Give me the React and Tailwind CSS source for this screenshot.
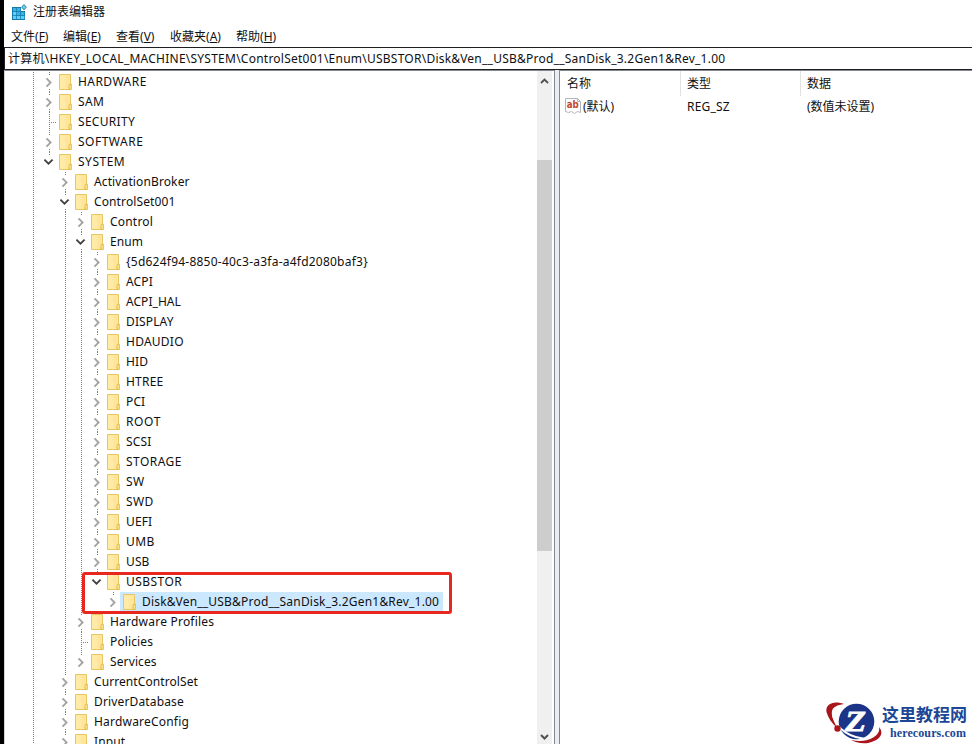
const tree = [
    { name: "HARDWARE", depth: 0, tracking: "tracking-[0.45px]" },
    { name: "SAM", depth: 0, tracking: "tracking-[0.4px]" },
    { name: "SECURITY", depth: 0, arrow: "none", tracking: "tracking-[0.3px]" },
    { name: "SOFTWARE", depth: 0, tracking: "tracking-[0.5px]" },
    { name: "SYSTEM", depth: 0, arrow: "down", below: false, tracking: "tracking-[0.5px]" },
    { name: "ActivationBroker", depth: 1 },
    { name: "ControlSet001", depth: 1, arrow: "down" },
    { name: "Control", depth: 2, tracking: "tracking-[0.2px]" },
    { name: "Enum", depth: 2, arrow: "down" },
    { name: "{5d624f94-8850-40c3-a3fa-a4fd2080baf3}", tracking: "tracking-[0.23px]" },
    { name: "ACPI" },
    { name: "ACPI_HAL", tracking: "tracking-[0.05px]" },
    { name: "DISPLAY" },
    { name: "HDAUDIO", tracking: "tracking-[0.25px]" },
    { name: "HID" },
    { name: "HTREE", tracking: "tracking-[0.2px]" },
    { name: "PCI" },
    { name: "ROOT", tracking: "tracking-[0.6px]" },
    { name: "SCSI", tracking: "tracking-[0.2px]" },
    { name: "STORAGE", tracking: "tracking-[0.45px]" },
    { name: "SW", tracking: "tracking-[0.4px]" },
    { name: "SWD", tracking: "tracking-[0.4px]" },
    { name: "UEFI" },
    { name: "UMB", tracking: "tracking-[0.4px]" },
    { name: "USB" },
    { name: "USBSTOR", arrow: "down", below: false, tracking: "tracking-[0.45px]" },
    { name: "Disk&Ven__USB&Prod__SanDisk_3.2Gen1&Rev_1.00", depth: 4, below: false, selected: true, tracking: "tracking-[0.2px]" },
    { name: "Hardware Profiles", depth: 2, tracking: "tracking-[0.22px]" },
    { name: "Policies", depth: 2, arrow: "none" },
    { name: "Services", depth: 2, below: false },
    { name: "CurrentControlSet", depth: 1, tracking: "tracking-[0.08px]" },
    { name: "DriverDatabase", depth: 1, tracking: "tracking-[0.15px]" },
    { name: "HardwareConfig", depth: 1, tracking: "tracking-[0.2px]" },
    { name: "Input", depth: 1 },
];

// which vertical guide lines run through a row, by depth
const guidesByDepth = [[1], [1, 0], [1, 0, 1], [1, 0, 1, 1], [1, 0, 1, 1, 0]];

const menus = [
    { label: "文件", hot: "F", width: "w-[52px]" },
    { label: "编辑", hot: "E", width: "w-[53px]" },
    { label: "查看", hot: "V", width: "w-[54px]" },
    { label: "收藏夹", hot: "A", width: "w-[66px]" },
    { label: "帮助", hot: "H", width: "w-[54px]" },
];

function Dots({ height }) {
    return <div className={`w-px bg-[repeating-linear-gradient(to_bottom,#808080_0_1px,transparent_1px_2px)] ${height}`} />;
}

function Arrow({ type }) {
    if (type === "down") {
        return (
            <svg className="block" width="16" height="13" viewBox="0 0 16 13" fill="none" stroke="#404040" strokeWidth="1.8">
                <path d="M3.4 3.6 7.5 7.7 11.6 3.6" />
            </svg>
        );
    }
    return (
        <svg className="block" width="16" height="13" viewBox="0 0 16 13" fill="none" stroke="#a2a2a2" strokeWidth="1.8">
            <path d="M5.5 2.4 9.6 6.5 5.5 10.6" />
        </svg>
    );
}

function Expander({ arrow, below }) {
    if (arrow === "none") {
        return (
            <div className="w-4 h-5 flex items-start pl-2">
                <Dots height="h-5" />
                <div className="mt-[10px] ml-px w-[6px] h-px bg-[repeating-linear-gradient(to_right,#808080_0_1px,transparent_1px_2px)]" />
            </div>
        );
    }
    return (
        <div className="w-4 h-5 flex flex-col">
            <div className="pl-2 h-1"><Dots height="h-[3px]" /></div>
            <Arrow type={arrow} />
            <div className="pl-2 h-[3px]">{below && <Dots height="h-[3px]" />}</div>
        </div>
    );
}

function Folder() {
    return (
        <svg className="block shrink-0" width="16" height="20" viewBox="0 0 16 20">
            <path d="M2.5 2.5h11v15h-11z" fill="#ffe69a" stroke="#e8c663" />
            <path d="M3 3h5v14H3z" fill="#ffeaa8" />
            <path d="M12 17.5v-4.5l1-1h1.3v5.5z" fill="#ffe58d" stroke="#dfb63f" strokeWidth="0.9" />
        </svg>
    );
}

function TreeRow({ item }) {
    const { name, depth = 3, arrow = "right", below = true, selected, tracking = "tracking-[0.12px]" } = item;

    return (
        <div className="flex h-5 shrink-0">
            {guidesByDepth[depth].map((on, i) => (
                <div key={i} className="w-4 h-5 pl-2 shrink-0">{on ? <Dots height="h-5" /> : null}</div>
            ))}
            <div className="shrink-0"><Expander arrow={arrow} below={below} /></div>
            <div className={`flex h-5 -ml-px pl-px pr-1 ${selected ? "bg-[#cce8ff]" : ""}`}>
                <Folder />
                <span className={`pl-[5px] leading-[19px] whitespace-pre ${tracking}`}>{name}</span>
            </div>
        </div>
    );
}

function AppIcon() {
    return (
        <svg className="block" width="16" height="18" viewBox="0 0 16 18">
            <path d="M1 4h9v4h4v9H1z" fill="#1478ab" />
            <path d="M2 5h3.3v3.3H2zM6 5h3.3v3.3H6zM10 9h3.3v3.3H10zM6 9h3.3v3.3H6z" fill="#35b2e6" />
            <path d="M2 9h3.3v3.3H2zM2 13h3.3v3H2zM6 13h3.3v3H6zM10 13h3.3v3H10z" fill="#5ccff6" />
            <path d="M13 1.6 15.3 4.2 13 6.8 10.7 4.2z" fill="#6fd0ee" stroke="#1f7fa8" />
        </svg>
    );
}

function StringIcon() {
    return (
        <svg className="block mt-[2px]" width="16" height="16" viewBox="0 0 16 16">
            <path d="M.5.5h12l3 3v11l-3-1-3 2-3-2-3 1-3-1z" fill="#fff" stroke="#b4b4b4" />
            <path d="M12.5.5v3h3" fill="none" stroke="#b4b4b4" />
            <text x="1.8" y="10" fontSize="10" fontWeight="700" fontFamily="DejaVu Sans, sans-serif" fill="#c5452e" textLength="12" lengthAdjust="spacingAndGlyphs">ab</text>
        </svg>
    );
}

function Watermark() {
    return (
        <div className="absolute left-[824px] top-[700px] flex">
            <svg className="block" width="58" height="44" viewBox="0 0 58 44">
                <path d="M20 4C10 0 1 4 2.5 12 4 18 8 23 13 28 10 21 7 16 8 11 9 7 13 5 20 4z" fill="#a8161c" />
                <circle cx="32.5" cy="21.5" r="17.8" fill="#1c3488" />
                <path d="M9 16C13 29 26 39 46 39" fill="none" stroke="#fff" strokeWidth="1.8" />
                <circle cx="13.5" cy="28.5" r="3.2" fill="#a8161c" />
                <path d="M27 40C36 42 44 41 50 37 54 34 56 31 55 27 61 34 55 41 44 43 37 44 31 42 27 40z" fill="#a8161c" />
                <text x="21" y="31" fontSize="29" fontStyle="italic" fontWeight="700" fontFamily="Liberation Serif, serif" fill="#fff" stroke="#fff" strokeWidth="0.8" textLength="21" lengthAdjust="spacingAndGlyphs">Z</text>
            </svg>
            <div className="flex flex-col">
                <span className="font-['Noto_Sans_CJK_SC',sans-serif] font-bold text-[17px] leading-6 pt-[2px] text-[#1c4796]">这里教程网</span>
                <span className="font-['Liberation_Serif',serif] font-bold text-[12px] leading-[14px] pl-2 tracking-[0.1px] text-[#1c4796]">herecours.com</span>
            </div>
        </div>
    );
}

export default function App() {
    return (
        <div className="relative w-[972px] h-[744px] overflow-hidden flex bg-white text-[12px] text-[#101010] font-['Noto_Sans','Noto_Sans_CJK_SC',sans-serif]">
            <div className="w-1 bg-black shrink-0" />
            <div className="flex flex-col flex-1 min-w-0">
                <div className="flex items-center h-6 pl-[7px] shrink-0">
                    <AppIcon />
                    <span className="pl-[6px] leading-6">注册表编辑器</span>
                </div>
                <div className="flex h-[23px] pl-[7px] shrink-0 leading-[26px]">
                    {menus.map((m) => (
                        <div key={m.hot} className={`${m.width} whitespace-nowrap`}>{m.label}(<u>{m.hot}</u>)</div>
                    ))}
                </div>
                <div className="h-[23px] shrink-0 border border-r-0 border-[#202020] pl-[3px] leading-[21px] whitespace-nowrap tracking-[0.24px]">
                    计算机\HKEY_LOCAL_MACHINE\SYSTEM\ControlSet001\Enum\USBSTOR\Disk&amp;Ven__USB&amp;Prod__SanDisk_3.2Gen1&amp;Rev_1.00
                </div>
                <div className="flex flex-1 min-h-0">
                    <div className="flex w-[551px] shrink-0 border-t border-r border-l border-t-[#828790] border-r-[#828790] border-l-[#d5d5d5] min-h-0">
                        <div className="flex flex-col flex-1 overflow-hidden pl-5 pt-px">
                            {tree.map((item) => <TreeRow key={item.name} item={item} />)}
                        </div>
                        <div className="w-[15px] mr-[2px] bg-[#f0f0f0] flex flex-col shrink-0">
                            <svg className="block" width="15" height="20" viewBox="0 0 15 20" fill="none" stroke="#505050" strokeWidth="1.8"><path d="M4 12 7.5 8.5 11 12" /></svg>
                            <div className="h-[391px] mt-[69px] bg-[#cdcdcd]" />
                            <svg className="block mt-auto" width="15" height="16" viewBox="0 0 15 16" fill="none" stroke="#505050" strokeWidth="2"><path d="M4 7 7.5 10.5 11 7" /></svg>
                        </div>
                    </div>
                    <div className="w-1 bg-[#ebedf2] shrink-0" />
                    <div className="flex-1 border-t border-l border-[#828790]">
                        <div className="flex h-[25px] leading-[25px]">
                            <div className="w-[121px] pl-[7px] border-r border-[#e2e2e2]">名称</div>
                            <div className="w-[120px] pl-[6px] border-r border-[#e2e2e2]">类型</div>
                            <div className="pl-[6px]">数据</div>
                        </div>
                        <div className="flex h-[22px] leading-[22px]">
                            <div className="w-[121px] pl-[5px] flex"><StringIcon /><span className="pl-[2px]">(默认)</span></div>
                            <div className="w-[120px] pl-[6px] tracking-[0.2px]">REG_SZ</div>
                            <div className="pl-[6px]">(数值未设置)</div>
                        </div>
                    </div>
                </div>
            </div>
            <div className="absolute left-[82px] top-[572px] w-[370px] h-[42px] border-3 border-[#e8281e] rounded-[3px]" />
            <Watermark />
        </div>
    );
}
